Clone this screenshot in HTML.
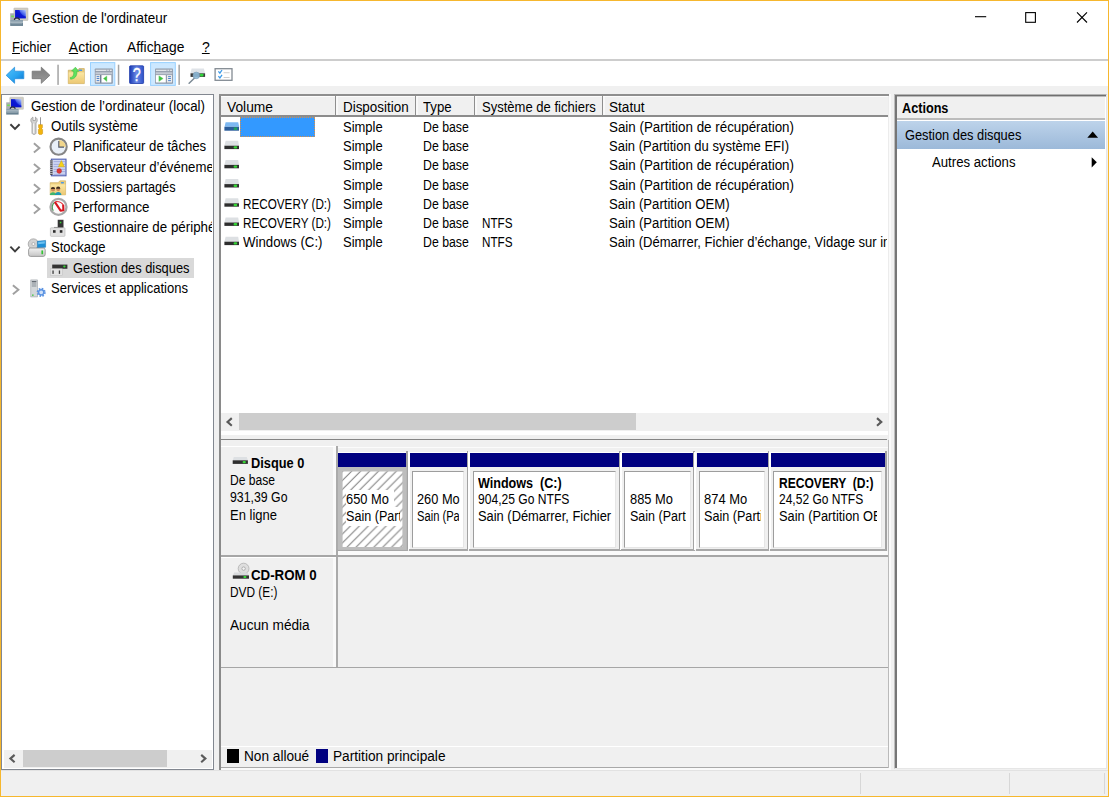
<!DOCTYPE html>
<html lang="fr">
<head>
<meta charset="utf-8">
<title>Gestion de l'ordinateur</title>
<style>
html,body{margin:0;padding:0;}
body{width:1109px;height:797px;overflow:hidden;background:#f0f0f0;font-family:"Liberation Sans",sans-serif;position:relative;}
#win{position:absolute;left:0;top:0;width:1107px;height:795px;border:1px solid #f6b72e;background:#f0f0f0;overflow:hidden;}
.a{position:absolute;}
.t{position:absolute;line-height:1;white-space:pre;color:#000;transform-origin:0 0;}
.s{display:inline-block;transform-origin:0 0;}
.t u{text-decoration:underline;text-underline-offset:0.8px;text-decoration-thickness:1px;}
svg{position:absolute;overflow:visible;}
.hs{top:95.7px;width:1.2px;height:19.6px;background:#8e8e8e;box-shadow:1.5px 0 0 #fff;}
.sb{top:773px;width:1px;height:21px;background:#d7d7d7;}
</style>
</head>
<body>
<div id="win"></div>
<!-- title + menu + toolbar backgrounds -->
<div class="a" style="left:1px;top:1px;width:1107px;height:58.5px;background:#fff"></div>
<div class="a" style="left:1px;top:59.2px;width:1107px;height:1.4px;background:#cdcdcd"></div>
<div class="a" style="left:1px;top:60.6px;width:1107px;height:25.6px;background:#fff"></div>

<!-- window controls -->
<svg style="left:970px;top:8px" width="124" height="20" viewBox="970 8 124 20">
<path d="M975 16.7H986.2" stroke="#000" stroke-width="1.1" fill="none"/>
<rect x="1025.7" y="12.6" width="9.7" height="9.7" stroke="#000" stroke-width="1.1" fill="none"/>
<path d="M1077 12.3L1087 22.5M1087 12.3L1077 22.5" stroke="#000" stroke-width="1.1" fill="none"/>
</svg>

<!--ICONS-TOP-->

<!-- ============ tree pane ============ -->
<div class="a" style="left:1.2px;top:94.2px;width:213px;height:675.4px;background:#fff;border:1.1px solid #828790;box-sizing:border-box"></div>
<div class="a" style="left:47px;top:258px;width:147px;height:19.8px;background:#d9d9d9"></div>
<!-- tree h-scrollbar -->
<div class="a" style="left:3.9px;top:750px;width:208.1px;height:17.5px;background:#f0f0f0"></div>
<div class="a" style="left:22.9px;top:750px;width:143.9px;height:16.8px;background:#cdcdcd"></div>
<svg style="left:3px;top:750px" width="210" height="17" viewBox="3 750 210 17">
<path d="M14.6 754.9L10.4 758.6L14.6 762.3" stroke="#5a5a5a" stroke-width="2.1" fill="none"/>
<path d="M201.2 754.9L205.4 758.6L201.2 762.3" stroke="#5a5a5a" stroke-width="2.1" fill="none"/>
</svg>
<!--ICONS-TREE-->

<!-- ============ middle pane ============ -->
<div class="a" style="left:218.8px;top:94.1px;width:672.7px;height:676px;background:#fafafa;box-sizing:border-box;border-left:2.3px solid #8a8a8a"></div>
<div class="a" style="left:218.8px;top:94.1px;width:670.3px;height:1.6px;background:#8e8e8e"></div>
<div class="a" style="left:221.1px;top:95.7px;width:667.7px;height:672.2px;background:#f0f0f0;box-sizing:border-box;border-right:1.3px solid #ececec;border-bottom:1.6px solid #a8a8a8"></div>
<div class="a" style="left:887.5px;top:440px;width:1.3px;height:327.9px;background:#bababa"></div>
<!-- list (white) -->
<div class="a" style="left:221.1px;top:95.7px;width:667px;height:339.5px;background:#fff"></div>
<!-- header -->
<div class="a" style="left:221.1px;top:95.7px;width:667px;height:19.6px;background:#f0f0f0;border-top:1.1px solid #fcfcfc;box-sizing:border-box"></div>
<div class="a" style="left:221.1px;top:115.2px;width:667px;height:1.7px;background:#8c8c8c"></div>
<div class="a hs" style="left:335.1px"></div>
<div class="a hs" style="left:415.3px"></div>
<div class="a hs" style="left:474px"></div>
<div class="a hs" style="left:601.5px"></div>
<!-- selected cell -->
<div class="a" style="left:240px;top:117px;width:74.7px;height:19.6px;background:#3399ff;box-sizing:border-box;border:1px dotted #d8904a"></div>
<!-- list h-scrollbar -->
<div class="a" style="left:221.1px;top:412.9px;width:667px;height:18.6px;background:#f0f0f0"></div>
<div class="a" style="left:239.1px;top:412.9px;width:397.2px;height:16.9px;background:#cdcdcd"></div>
<svg style="left:220px;top:413px" width="668" height="17" viewBox="220 413 668 17">
<path d="M231.8 418.1L227.5 421.9L231.8 425.7" stroke="#5a5a5a" stroke-width="2.1" fill="none"/>
<path d="M877 418.1L881.3 421.9L877 425.7" stroke="#5a5a5a" stroke-width="2.1" fill="none"/>
</svg>
<!-- splitter -->
<div class="a" style="left:221.1px;top:435.2px;width:667px;height:3.5px;background:#f0f0f0"></div>
<div class="a" style="left:221.1px;top:438.7px;width:666px;height:1.4px;background:#858585"></div>


<!-- disk 0 row -->
<div class="a" style="left:221.1px;top:446.3px;width:114.5px;height:109px;border-top:1.2px solid #fff;box-sizing:border-box"></div>
<div class="a" style="left:333px;top:447.4px;width:3.1px;height:108px;background:#fafafa"></div>
<div class="a" style="left:336.1px;top:446.2px;width:1.8px;height:109.4px;background:#ababab"></div>
<div class="a" style="left:221px;top:555.4px;width:666.5px;height:1.3px;background:#a6a6a6"></div>
<div class="a" style="left:337.6px;top:447px;width:550px;height:1.1px;background:#fbfbfb"></div>
<div class="a" style="left:337.6px;top:551px;width:550px;height:4.4px;background:#fafafa"></div>
<div class="a" style="left:337.9px;top:451.5px;width:68.4px;height:1.2px;background:#fff"></div>
<div class="a" style="left:406.3px;top:451.4px;width:1.9px;height:99.4px;background:#a3a3a3"></div>
<div class="a" style="left:337.3px;top:549.4px;width:70.5px;height:1.5px;background:#a8a8a8"></div>
<div class="a" style="left:338.3px;top:452.6px;width:68.0px;height:14.3px;background:#000080"></div>
<svg style="left:337.9px;top:466.9px" width="68.8" height="82.9" viewBox="0 0 68.8 82.9"><defs><pattern id="hatch" width="8.93" height="8.93" patternUnits="userSpaceOnUse" x="5.0" y="3.9"><rect width="9" height="9" fill="#fff"/><path d="M-1 9.93L9.93 -1M-1 1L1 -1M7.93 9.93L9.93 7.93" stroke="#7c7c7c" stroke-width="1" fill="none"/></pattern></defs><rect x="0" y="0" width="68.8" height="82.9" fill="#bdbdbd"/><rect x="4.6" y="4.5" width="59.8" height="75.5" fill="url(#hatch)"/></svg>
<div class="a" style="left:407.6px;top:451.6px;width:2.2px;height:98.6px;background:#fff"></div>
<div class="a" style="left:407.6px;top:451.5px;width:59.0px;height:1.2px;background:#fff"></div>
<div class="a" style="left:466.6px;top:451.4px;width:1.9px;height:99.4px;background:#a3a3a3"></div>
<div class="a" style="left:408.8px;top:549.4px;width:59.3px;height:1.5px;background:#a8a8a8"></div>
<div class="a" style="left:409.8px;top:452.6px;width:56.8px;height:14.3px;background:#000080"></div>
<div class="a" style="left:412.4px;top:470.6px;width:51.8px;height:77.2px;box-sizing:border-box;background:#fff;border-left:1.3px solid #9d9d9d;border-top:1.3px solid #9d9d9d;border-right:1.3px solid #e6e6e6;border-bottom:1.3px solid #e6e6e6"></div>
<div class="a" style="left:467.9px;top:451.6px;width:2.2px;height:98.6px;background:#fff"></div>
<div class="a" style="left:467.9px;top:451.5px;width:150.8px;height:1.2px;background:#fff"></div>
<div class="a" style="left:618.7px;top:451.4px;width:1.9px;height:99.4px;background:#a3a3a3"></div>
<div class="a" style="left:469.1px;top:549.4px;width:151.1px;height:1.5px;background:#a8a8a8"></div>
<div class="a" style="left:470.1px;top:452.6px;width:148.6px;height:14.3px;background:#000080"></div>
<div class="a" style="left:472.7px;top:470.6px;width:143.6px;height:77.2px;box-sizing:border-box;background:#fff;border-left:1.3px solid #9d9d9d;border-top:1.3px solid #9d9d9d;border-right:1.3px solid #e6e6e6;border-bottom:1.3px solid #e6e6e6"></div>
<div class="a" style="left:619.6px;top:451.6px;width:2.2px;height:98.6px;background:#fff"></div>
<div class="a" style="left:619.6px;top:451.5px;width:73.7px;height:1.2px;background:#fff"></div>
<div class="a" style="left:693.3px;top:451.4px;width:1.9px;height:99.4px;background:#a3a3a3"></div>
<div class="a" style="left:620.8px;top:549.4px;width:74.0px;height:1.5px;background:#a8a8a8"></div>
<div class="a" style="left:621.8px;top:452.6px;width:71.5px;height:14.3px;background:#000080"></div>
<div class="a" style="left:624.4px;top:470.6px;width:66.5px;height:77.2px;box-sizing:border-box;background:#fff;border-left:1.3px solid #9d9d9d;border-top:1.3px solid #9d9d9d;border-right:1.3px solid #e6e6e6;border-bottom:1.3px solid #e6e6e6"></div>
<div class="a" style="left:694.3px;top:451.6px;width:2.2px;height:98.6px;background:#fff"></div>
<div class="a" style="left:694.3px;top:451.5px;width:73.2px;height:1.2px;background:#fff"></div>
<div class="a" style="left:767.5px;top:451.4px;width:1.9px;height:99.4px;background:#a3a3a3"></div>
<div class="a" style="left:695.5px;top:549.4px;width:73.5px;height:1.5px;background:#a8a8a8"></div>
<div class="a" style="left:696.5px;top:452.6px;width:71.0px;height:14.3px;background:#000080"></div>
<div class="a" style="left:699.1px;top:470.6px;width:66.0px;height:77.2px;box-sizing:border-box;background:#fff;border-left:1.3px solid #9d9d9d;border-top:1.3px solid #9d9d9d;border-right:1.3px solid #e6e6e6;border-bottom:1.3px solid #e6e6e6"></div>
<div class="a" style="left:768.5px;top:451.6px;width:2.2px;height:98.6px;background:#fff"></div>
<div class="a" style="left:768.5px;top:451.5px;width:116.3px;height:1.2px;background:#fff"></div>
<div class="a" style="left:884.8px;top:451.4px;width:1.9px;height:99.4px;background:#a3a3a3"></div>
<div class="a" style="left:769.7px;top:549.4px;width:116.6px;height:1.5px;background:#a8a8a8"></div>
<div class="a" style="left:770.7px;top:452.6px;width:114.1px;height:14.3px;background:#000080"></div>
<div class="a" style="left:773.3px;top:470.6px;width:109.1px;height:77.2px;box-sizing:border-box;background:#fff;border-left:1.3px solid #9d9d9d;border-top:1.3px solid #9d9d9d;border-right:1.3px solid #e6e6e6;border-bottom:1.3px solid #e6e6e6"></div>

<!-- cd-rom row -->
<div class="a" style="left:221.1px;top:557.3px;width:114.5px;height:110px;border-top:1.2px solid #fff;box-sizing:border-box"></div>
<div class="a" style="left:333px;top:558.4px;width:3.1px;height:109px;background:#fafafa"></div>
<div class="a" style="left:336.1px;top:557.2px;width:1.8px;height:110.4px;background:#ababab"></div>
<div class="a" style="left:221px;top:667px;width:666.5px;height:1.3px;background:#a6a6a6"></div>

<!-- legend -->
<div class="a" style="left:221.1px;top:746.1px;width:666.6px;height:1.2px;background:#fff"></div>
<div class="a" style="left:227px;top:749.4px;width:11.8px;height:14.1px;background:#000"></div>
<div class="a" style="left:315.6px;top:749.4px;width:12px;height:14.1px;background:#000080"></div>

<!-- ============ actions pane ============ -->
<div class="a" style="left:894px;top:94px;width:213px;height:675px;background:#fff;box-sizing:border-box;border-left:1px solid #bdbdbd;border-top:1px solid #b4b4b4;border-right:1px solid #e6e6e6;border-bottom:1px solid #e6e6e6"></div>
<div class="a" style="left:895px;top:95px;width:211px;height:673px;box-sizing:border-box;border-left:2px solid #767676;border-top:1px solid #707070"></div>
<div class="a" style="left:897px;top:96px;width:209px;height:1px;background:#b9b9b9"></div>
<div class="a" style="left:896.9px;top:97.4px;width:208.6px;height:21px;background:#f0f0f0"></div>
<div class="a" style="left:896.9px;top:118.4px;width:208.6px;height:1.4px;background:#bcbcbc"></div>
<div class="a" style="left:896.9px;top:120.8px;width:208.6px;height:27.9px;background:linear-gradient(#bdd3ea,#9cb9d9)"></div>
<svg style="left:1085px;top:130px" width="16" height="40" viewBox="1085 130 16 40">
<path d="M1087.3 137.8L1092.7 131.4L1098.1 137.8Z" fill="#000"/>
<path d="M1091.7 157.2L1096.8 162.3L1091.7 167.5Z" fill="#000"/>
</svg>

<!-- ============ status bar ============ -->
<div class="a" style="left:1px;top:770.3px;width:1107px;height:1px;background:#e2e2e2"></div>
<div class="a sb" style="left:859.5px"></div>
<div class="a sb" style="left:1009px"></div>
<div class="a sb" style="left:1104px"></div>

<svg style="left:0;top:0" width="1109" height="797" viewBox="0 0 1109 797"><defs><linearGradient id="gBack" x1="0" y1="0" x2="1" y2="1"><stop offset="0" stop-color="#52c4fb"/><stop offset="0.55" stop-color="#2aa4f0"/><stop offset="1" stop-color="#0570cc"/></linearGradient><linearGradient id="gFwd" x1="0" y1="0" x2="0" y2="1"><stop offset="0" stop-color="#7c7c7c"/><stop offset="1" stop-color="#9a9a9a"/></linearGradient><linearGradient id="gFold" x1="0" y1="0" x2="0" y2="1"><stop offset="0" stop-color="#fbe7a4"/><stop offset="1" stop-color="#ecc873"/></linearGradient><linearGradient id="gHelp" x1="0" y1="0" x2="1" y2="0"><stop offset="0" stop-color="#1a3ab4"/><stop offset="0.5" stop-color="#6b8ae6"/><stop offset="1" stop-color="#2c50c8"/></linearGradient><linearGradient id="gScr" x1="0" y1="1" x2="1" y2="0"><stop offset="0" stop-color="#0818d8"/><stop offset="0.45" stop-color="#1030e0"/><stop offset="1" stop-color="#b8ccff"/></linearGradient><linearGradient id="gBox" x1="0" y1="0" x2="0" y2="1"><stop offset="0" stop-color="#8ea2b0"/><stop offset="1" stop-color="#5f7a8a"/></linearGradient><linearGradient id="gDrv" x1="0" y1="0" x2="0" y2="1"><stop offset="0" stop-color="#f2f2f2"/><stop offset="1" stop-color="#c4c4c4"/></linearGradient></defs><g transform="translate(10 8) scale(1.0)"><rect x="3.9" y="0" width="14.1" height="12.5" rx="0.6" fill="#cfcdc4" stroke="#b8b6ae" stroke-width="0.5"/><rect x="5.2" y="2" width="10.6" height="8.3" fill="url(#gScr)"/><path d="M5.2 2H9.3C10.4 4.6 11.4 7.4 15.8 8.6V10.3H5.2Z" fill="#0a10cc" opacity="0.75"/><rect x="0.2" y="5.3" width="4" height="7" fill="#a9adb0"/><rect x="1.2" y="7.6" width="2.7" height="1.5" fill="#6fe04c"/><path d="M4.4 12.2C4.4 9.2 9.4 9.2 9.4 12.2" stroke="#2e3440" stroke-width="1.2" fill="none"/><rect x="0.2" y="12" width="12.8" height="5.9" fill="url(#gBox)"/><rect x="0.2" y="13.6" width="12.8" height="1.1" fill="#b9c6ce"/><rect x="1.2" y="15.2" width="10.8" height="1" fill="#8fa2ae"/></g><path d="M6.2 75.3L14.6 67.2V71.2H23.8V78.7H14.6V83.3Z" fill="url(#gBack)" stroke="#2a8fdc" stroke-width="0.8" stroke-linejoin="round"/><path d="M49.9 75.3L41.3 67.2V71.2H32.2V78.7H41.3V83.3Z" fill="url(#gFwd)" stroke="#747474" stroke-width="0.8" stroke-linejoin="round"/><rect x="57.3" y="64.7" width="1.5" height="20.2" fill="#a4a4a4"/><rect x="117.8" y="64.7" width="1.5" height="20.2" fill="#a4a4a4"/><rect x="178.4" y="64.7" width="1.5" height="20.2" fill="#a4a4a4"/><path d="M68.3 70.2H77.5L79 68.6H84.3V83.6H68.3Z" fill="#e9cc7c" stroke="#c9a95a" stroke-width="0.7"/><rect x="68.6" y="72.4" width="15.5" height="11" fill="url(#gFold)"/><rect x="78.6" y="69.6" width="3.6" height="1.5" rx="0.7" fill="#4a98e8"/><path d="M70.2 77.6C73.4 77.2 74 74.2 73.6 71.2L71.6 71L75.4 67.2L78.8 71.4L76.9 71.2C77.4 76 74.6 79 70.6 79.2Z" fill="#5fe05f" stroke="#40bc40" stroke-width="0.6"/><rect x="90.5" y="62.6" width="24.299999999999997" height="22.8" fill="#cce8ff" stroke="#99d1ff" stroke-width="1"/><rect x="150.6" y="62.6" width="24.700000000000017" height="22.8" fill="#cce8ff" stroke="#99d1ff" stroke-width="1"/><rect x="94.8" y="68.4" width="18" height="15.3" rx="0.8" fill="#8d97a6"/><rect x="95.39999999999999" y="69.2" width="16.8" height="2.2" fill="#aab2be"/><rect x="95.8" y="69.9" width="10.4" height="0.9" fill="#eef0f4"/><rect x="107.39999999999999" y="69.8" width="1.2" height="1.1" fill="#eef0f4"/><rect x="110.0" y="69.8" width="1.6" height="1.1" fill="#eef0f4"/><rect x="95.39999999999999" y="72.2" width="16.8" height="2.2" fill="#c3c9d3"/><rect x="95.6" y="75.1" width="4.6" height="7.4" fill="#ececec"/><rect x="96.6" y="76.2" width="2.7" height="0.9" fill="#3d78c8"/><rect x="96.6" y="78" width="2.7" height="0.9" fill="#3d78c8"/><rect x="96.6" y="80.2" width="2.7" height="0.9" fill="#3d78c8"/><rect x="100.2" y="75" width="1" height="7.6" fill="#66758c"/><rect x="101.5" y="75.1" width="9.9" height="7.4" fill="#fff"/><path d="M103.4 78.6L106.9 75.9V81.5Z" fill="#3fbf3f" stroke="#6fd66f" stroke-width="0.4"/><rect x="129.6" y="65.8" width="14" height="17.7" rx="0.8" fill="url(#gHelp)" stroke="#1c38a8" stroke-width="0.8"/><text x="0" y="0" transform="translate(136.7 81.3) scale(0.82 1)" font-family="Liberation Sans, sans-serif" font-size="17.5" text-anchor="middle" fill="#fff" stroke="#fff" stroke-width="0.35">?</text><rect x="155.0" y="68.4" width="18" height="15.3" rx="0.8" fill="#8d97a6"/><rect x="155.6" y="69.2" width="16.8" height="2.2" fill="#aab2be"/><rect x="156.0" y="69.9" width="10.4" height="0.9" fill="#eef0f4"/><rect x="167.6" y="69.8" width="1.2" height="1.1" fill="#eef0f4"/><rect x="170.2" y="69.8" width="1.6" height="1.1" fill="#eef0f4"/><rect x="155.6" y="72.2" width="16.8" height="2.2" fill="#c3c9d3"/><rect x="155.8" y="75.1" width="10" height="7.4" fill="#fff"/><path d="M163.2 78.6L158.9 75.8V81.4Z" fill="#3fbf3f" stroke="#6fd66f" stroke-width="0.4"/><rect x="166.9" y="75.1" width="5.2" height="7.4" fill="#ececec"/><rect x="168.1" y="76.2" width="2.8" height="0.9" fill="#3d78c8"/><rect x="168.1" y="78" width="2.8" height="0.9" fill="#3d78c8"/><rect x="168.1" y="80.2" width="2.8" height="0.9" fill="#3d78c8"/><path d="M191.6 68.4H203.9L205 73.3H190.5Z" fill="#dfe3e8"/><rect x="190.5" y="73.3" width="14.6" height="3.6" fill="#3a3a3a"/><rect x="199.9" y="73.8" width="3.6" height="2.6" rx="0.8" fill="#2fd43a"/><path d="M194.3 78.2L189.1 83.3" stroke="#7d8b96" stroke-width="1.5" stroke-linecap="round"/><circle cx="196.3" cy="75.4" r="3.3" fill="#8db9d8" fill-opacity="0.9" stroke="#7c9cb4" stroke-width="0.7"/><rect x="215.1" y="68.7" width="16.9" height="11.6" fill="#fff" stroke="#838b93" stroke-width="1.3"/><path d="M218.4 71.4L219.9 73.2L222 70" stroke="#3c9ae8" stroke-width="1.3" fill="none"/><path d="M218.4 76.2L219.9 78L222 74.8" stroke="#3c9ae8" stroke-width="1.3" fill="none"/><rect x="223.6" y="72.3" width="6" height="0.9" fill="#c9c9c9"/><rect x="223.6" y="77" width="6" height="0.9" fill="#c9c9c9"/><g transform="translate(6 97.2) scale(0.97)"><rect x="3.9" y="0" width="14.1" height="12.5" rx="0.6" fill="#cfcdc4" stroke="#b8b6ae" stroke-width="0.5"/><rect x="5.2" y="2" width="10.6" height="8.3" fill="url(#gScr)"/><path d="M5.2 2H9.3C10.4 4.6 11.4 7.4 15.8 8.6V10.3H5.2Z" fill="#0a10cc" opacity="0.75"/><rect x="0.2" y="5.3" width="4" height="7" fill="#a9adb0"/><rect x="1.2" y="7.6" width="2.7" height="1.5" fill="#6fe04c"/><path d="M4.4 12.2C4.4 9.2 9.4 9.2 9.4 12.2" stroke="#2e3440" stroke-width="1.2" fill="none"/><rect x="0.2" y="12" width="12.8" height="5.9" fill="url(#gBox)"/><rect x="0.2" y="13.6" width="12.8" height="1.1" fill="#b9c6ce"/><rect x="1.2" y="15.2" width="10.8" height="1" fill="#8fa2ae"/></g><path d="M10.4 124.25999999999999L15 128.96L19.6 124.25999999999999" stroke="#3c3c3c" stroke-width="1.95" fill="none"/><path d="M33 117.16C30.6 118.06 30 121.06 32 122.86V132.86C32 134.96 36 134.96 36 132.86V122.86C38 121.06 37.4 118.06 35.4 117.16V120.46000000000001H33Z" fill="#d2d2d2" stroke="#909090" stroke-width="0.7"/><rect x="33" y="123.46000000000001" width="1.2" height="9.6" fill="#f2f2f2"/><rect x="40" y="117.26" width="0.9" height="8" fill="#8c8c8c"/><path d="M38.6 124.66H42.4V127.66L41.7 128.46L42.6 129.46V133.46C42.6 134.86 38.4 134.86 38.4 133.46V129.46L39.3 128.46L38.6 127.66Z" fill="#f2b40e" stroke="#c88a06" stroke-width="0.5"/><path d="M33.9 143.32L39.4 147.92L33.9 152.51999999999998" stroke="#a0a0a0" stroke-width="1.95" fill="none"/><circle cx="58.6" cy="146.72" r="8.1" fill="#e9f0f8" stroke="#868686" stroke-width="2.1"/><path d="M58.8 146.92V139.92A7 7 0 0 1 65.8 146.92Z" fill="#f1d68c"/><path d="M58.8 141.12V147.12H64" stroke="#50586a" stroke-width="1.1" fill="none"/><path d="M33.9 163.88L39.4 168.48L33.9 173.07999999999998" stroke="#a0a0a0" stroke-width="1.95" fill="none"/><rect x="51.4" y="159.17999999999998" width="14.6" height="16.6" fill="#cfd6f2" stroke="#4f5fb2" stroke-width="1.1"/><rect x="53.6" y="161.4" width="11.6" height="0.7" fill="#8f9ad6"/><rect x="53.6" y="163.9" width="11.6" height="0.7" fill="#8f9ad6"/><rect x="53.6" y="166.4" width="11.6" height="0.7" fill="#8f9ad6"/><rect x="53.6" y="168.9" width="11.6" height="0.7" fill="#8f9ad6"/><rect x="53.6" y="171.4" width="11.6" height="0.7" fill="#8f9ad6"/><rect x="53.6" y="173.9" width="11.6" height="0.7" fill="#8f9ad6"/><rect x="50.2" y="159.98" width="2.4" height="15" fill="#4a4a52"/><rect x="49.8" y="160.6" width="3" height="0.8" fill="#c8c8d0"/><rect x="49.8" y="162.7" width="3" height="0.8" fill="#c8c8d0"/><rect x="49.8" y="164.8" width="3" height="0.8" fill="#c8c8d0"/><rect x="49.8" y="166.9" width="3" height="0.8" fill="#c8c8d0"/><rect x="49.8" y="169.0" width="3" height="0.8" fill="#c8c8d0"/><rect x="49.8" y="171.1" width="3" height="0.8" fill="#c8c8d0"/><rect x="49.8" y="173.2" width="3" height="0.8" fill="#c8c8d0"/><path d="M61.4 160.57999999999998L64.4 166.77999999999997H58.4Z" fill="#f6d21a" stroke="#c8a000" stroke-width="0.4"/><circle cx="59.2" cy="170.98" r="2.4" fill="#e03a3a" stroke="#b01c1c" stroke-width="0.4"/><path d="M33.9 184.14000000000001L39.4 188.74L33.9 193.34" stroke="#a0a0a0" stroke-width="1.95" fill="none"/><path d="M50.2 182.64000000000001H58L60 180.84H65.6V194.84H50.2Z" fill="#edcf7e" stroke="#c9a95a" stroke-width="0.6"/><rect x="50.5" y="184.44" width="14.8" height="10.2" fill="url(#gFold)"/><rect x="60.8" y="182.04" width="3.2" height="1.5" rx="0.7" fill="#4a98e8"/><circle cx="53" cy="189.44" r="2.1" fill="#c98c5c"/><path d="M50.9 189.04A2.1 2.1 0 0 1 55.1 189.04Z" fill="#3c2c20"/><path d="M49.8 195.04C49.8 191.24 56.2 191.24 56.2 195.04Z" fill="#3fb56a"/><circle cx="58.2" cy="189.04" r="2.1" fill="#c98c5c"/><path d="M56.1 188.64000000000001A2.1 2.1 0 0 1 60.3 188.64000000000001Z" fill="#3c2c20"/><path d="M55 195.04C55 190.84 61.4 190.84 61.4 195.04Z" fill="#1f9ab4"/><path d="M33.9 204.40000000000003L39.4 209.00000000000003L33.9 213.60000000000002" stroke="#a0a0a0" stroke-width="1.95" fill="none"/><circle cx="58.5" cy="206.90000000000003" r="8" fill="#fbfbfb" stroke="#a8a8a8" stroke-width="2.3"/><path d="M53.4 210.70000000000002A6 6 0 0 1 54.4 202.50000000000003" stroke="#4a9a5a" stroke-width="1.2" fill="none"/><path d="M54.8 201.90000000000003L60.6 210.70000000000002L63.4 210.3L63.2 204.90000000000003" stroke="#d8141e" stroke-width="2.1" fill="none" stroke-linejoin="round"/><path d="M55.6 201.50000000000003C59 201.3 62 202.70000000000002 63.4 205.10000000000002" stroke="#e03038" stroke-width="1.1" fill="none"/><rect x="57.7" y="219.76000000000002" width="5.8" height="8.2" fill="#343434"/><rect x="59.8" y="221.76000000000002" width="1.5" height="1.5" fill="#35d435"/><path d="M54 226.96H58V227.96H54Z" fill="#585858"/><rect x="50.4" y="227.76000000000002" width="14.6" height="8.6" rx="0.8" fill="#e2e2e2" stroke="#b4b4b4" stroke-width="0.6"/><rect x="53" y="230.16000000000003" width="2.6" height="2.6" fill="#2c2c2c"/><rect x="59.8" y="230.16000000000003" width="2.6" height="2.6" fill="#2c2c2c"/><path d="M10.4 246.62L15 251.32000000000002L19.6 246.62" stroke="#3c3c3c" stroke-width="1.95" fill="none"/><circle cx="33.4" cy="244.02" r="5.2" fill="#d2d2d2" stroke="#9a9a9a" stroke-width="0.7"/><circle cx="33.4" cy="244.02" r="1.5" fill="#f6f6f6" stroke="#8a8a8a" stroke-width="0.5"/><path d="M37.4 241.22L45.6 240.42000000000002V247.22L37.4 248.02Z" fill="#1f8fd6" stroke="#1670b0" stroke-width="0.5"/><path d="M38.2 242.02L44.8 241.32V243.42000000000002L38.2 244.22Z" fill="#6cc0f0"/><rect x="28.6" y="248.02" width="16.6" height="8.4" rx="2" fill="url(#gDrv)" stroke="#8c8c8c" stroke-width="0.8"/><rect x="41.4" y="250.42000000000002" width="1.7" height="3.8" fill="#35c435"/><path d="M53.4 260.68H66L67.3 264.58H52.2Z" fill="#d6d8da"/><rect x="52.2" y="264.58" width="15.2" height="4.2" fill="#333"/><rect x="63.2" y="265.58" width="2.4" height="1.8" rx="0.8" fill="#35d435"/><rect x="50.3" y="268.78" width="12" height="6.8" fill="#e4e4e4" stroke="#bdbdbd" stroke-width="0.5"/><rect x="52.4" y="270.48" width="1.3" height="3.4" fill="#3c3c3c"/><rect x="58.8" y="270.48" width="1.3" height="3.4" fill="#3c3c3c"/><path d="M12.9 285.14L18.400000000000002 289.74L12.9 294.34000000000003" stroke="#a0a0a0" stroke-width="1.95" fill="none"/><rect x="30.8" y="279.94" width="6.6" height="17" fill="#d3d7da" stroke="#9aa0a6" stroke-width="0.6"/><rect x="31.8" y="281.14" width="4.6" height="1.2" fill="#555c64"/><rect x="31.8" y="283.53999999999996" width="4.6" height="0.9" fill="#7e868e"/><rect x="31.8" y="285.53999999999996" width="4.6" height="0.9" fill="#7e868e"/><rect x="32" y="294.53999999999996" width="1.6" height="1.2" fill="#35c435"/><circle cx="41.2" cy="292.34" r="3.4" fill="none" stroke="#5b93e2" stroke-width="2.3" stroke-dasharray="1.5 1.17"/><circle cx="41.2" cy="292.34" r="2.6" fill="#cfe0f8" stroke="#5b93e2" stroke-width="1.4"/><g transform="translate(224.6 122.2)"><path d="M1 0H13.6L14.6 4.6H0Z" fill="#7db8f2"/><rect x="-0.2" y="4.6" width="14.6" height="3.9" fill="#2a5c9a"/><rect x="9.2" y="5.2" width="3.4" height="2.6" fill="#20a060"/></g><g transform="translate(224.6 140.7)"><path d="M1 0H13.6L14.4 5H-0.2Z" fill="#dde0e3"/><rect x="-0.2" y="5" width="14.6" height="3.4" fill="#2e2e2e"/><rect x="9" y="5.5" width="3.6" height="2.4" rx="1" fill="#35d435"/></g><g transform="translate(224.6 159.9)"><path d="M1 0H13.6L14.4 5H-0.2Z" fill="#dde0e3"/><rect x="-0.2" y="5" width="14.6" height="3.4" fill="#2e2e2e"/><rect x="9" y="5.5" width="3.6" height="2.4" rx="1" fill="#35d435"/></g><g transform="translate(224.6 179.1)"><path d="M1 0H13.6L14.4 5H-0.2Z" fill="#dde0e3"/><rect x="-0.2" y="5" width="14.6" height="3.4" fill="#2e2e2e"/><rect x="9" y="5.5" width="3.6" height="2.4" rx="1" fill="#35d435"/></g><g transform="translate(224.6 198.3)"><path d="M1 0H13.6L14.4 5H-0.2Z" fill="#dde0e3"/><rect x="-0.2" y="5" width="14.6" height="3.4" fill="#2e2e2e"/><rect x="9" y="5.5" width="3.6" height="2.4" rx="1" fill="#35d435"/></g><g transform="translate(224.6 217.5)"><path d="M1 0H13.6L14.4 5H-0.2Z" fill="#dde0e3"/><rect x="-0.2" y="5" width="14.6" height="3.4" fill="#2e2e2e"/><rect x="9" y="5.5" width="3.6" height="2.4" rx="1" fill="#35d435"/></g><g transform="translate(224.6 236.7)"><path d="M1 0H13.6L14.4 5H-0.2Z" fill="#dde0e3"/><rect x="-0.2" y="5" width="14.6" height="3.4" fill="#2e2e2e"/><rect x="9" y="5.5" width="3.6" height="2.4" rx="1" fill="#35d435"/></g><path d="M233.8 457H246.8L247.8 460.3H232.8Z" fill="#dde0e3"/><rect x="232.7" y="460.3" width="15.2" height="3.6" fill="#2e2e2e"/><rect x="242.6" y="460.9" width="3.2" height="2.4" rx="1" fill="#35d435"/><circle cx="243.6" cy="568.6" r="5.4" fill="#dedede" stroke="#a8a8a8" stroke-width="0.7"/><circle cx="243.6" cy="568.6" r="1.7" fill="#f4f4f4" stroke="#8e8e8e" stroke-width="0.6"/><path d="M234.2 572.4H247.6L249 575.4H232.8Z" fill="#d8dadc"/><rect x="232.8" y="575.4" width="16.2" height="3.3" fill="#333"/><rect x="243.4" y="575.9" width="3" height="2.2" rx="0.8" fill="#35d435"/></svg>
<div class="t" style="left:31.8px;top:11px;font-size:14px;transform:scaleX(0.9627);">Gestion de l&#x27;ordinateur</div>
<div class="t" style="left:12.1px;top:40px;font-size:14px;transform:scaleX(0.9282);"><u>F</u>ichier</div>
<div class="t" style="left:68.8px;top:40px;font-size:14px;"><u>A</u>ction</div>
<div class="t" style="left:127.2px;top:40px;font-size:14px;transform:scaleX(0.9858);">Affic<u>h</u>age</div>
<div class="t" style="left:201.9px;top:40px;font-size:14px;"><u>?</u></div>
<div class="t" style="left:30.6px;top:99px;font-size:14px;transform:scaleX(0.9515);">Gestion de l’ordinateur (local)</div>
<div class="t" style="left:50.9px;top:119px;font-size:14px;transform:scaleX(0.9476);">Outils système</div>
<div class="t" style="left:72.7px;top:139px;font-size:14px;transform:scaleX(0.9404);">Planificateur de tâches</div>
<div class="t" style="left:72.7px;top:160px;font-size:14px;width:139.0px;overflow:hidden;padding-bottom:4px;"><span class="s" style="transform:scaleX(0.9418);">Observateur d’événements</span></div>
<div class="t" style="left:72.7px;top:180px;font-size:14px;transform:scaleX(0.9085);">Dossiers partagés</div>
<div class="t" style="left:72.7px;top:200px;font-size:14px;transform:scaleX(0.9544);">Performance</div>
<div class="t" style="left:72.7px;top:220px;font-size:14px;width:139.0px;overflow:hidden;padding-bottom:4px;"><span class="s" style="transform:scaleX(0.9530);">Gestionnaire de périphériques</span></div>
<div class="t" style="left:50.9px;top:240px;font-size:14px;transform:scaleX(0.9336);">Stockage</div>
<div class="t" style="left:72.7px;top:261px;font-size:14px;transform:scaleX(0.9183);">Gestion des disques</div>
<div class="t" style="left:50.9px;top:281px;font-size:14px;transform:scaleX(0.9315);">Services et applications</div>
<div class="t" style="left:226.8px;top:100px;font-size:14px;transform:scaleX(0.9849);">Volume</div>
<div class="t" style="left:343.0px;top:100px;font-size:14px;transform:scaleX(0.9579);">Disposition</div>
<div class="t" style="left:422.9px;top:100px;font-size:14px;transform:scaleX(0.9420);">Type</div>
<div class="t" style="left:481.5px;top:100px;font-size:14px;transform:scaleX(0.9315);">Système de fichiers</div>
<div class="t" style="left:608.9px;top:100px;font-size:14px;transform:scaleX(0.9728);">Statut</div>
<div class="t" style="left:343.0px;top:120px;font-size:14px;transform:scaleX(0.9276);">Simple</div>
<div class="t" style="left:422.9px;top:120px;font-size:14px;transform:scaleX(0.8781);">De base</div>
<div class="t" style="left:608.9px;top:120px;font-size:14px;transform:scaleX(0.9547);">Sain (Partition de récupération)</div>
<div class="t" style="left:343.0px;top:139px;font-size:14px;transform:scaleX(0.9276);">Simple</div>
<div class="t" style="left:422.9px;top:139px;font-size:14px;transform:scaleX(0.8781);">De base</div>
<div class="t" style="left:608.9px;top:139px;font-size:14px;transform:scaleX(0.9290);">Sain (Partition du système EFI)</div>
<div class="t" style="left:343.0px;top:158px;font-size:14px;transform:scaleX(0.9276);">Simple</div>
<div class="t" style="left:422.9px;top:158px;font-size:14px;transform:scaleX(0.8781);">De base</div>
<div class="t" style="left:608.9px;top:158px;font-size:14px;transform:scaleX(0.9547);">Sain (Partition de récupération)</div>
<div class="t" style="left:343.0px;top:178px;font-size:14px;transform:scaleX(0.9276);">Simple</div>
<div class="t" style="left:422.9px;top:178px;font-size:14px;transform:scaleX(0.8781);">De base</div>
<div class="t" style="left:608.9px;top:178px;font-size:14px;transform:scaleX(0.9547);">Sain (Partition de récupération)</div>
<div class="t" style="left:242.7px;top:197px;font-size:14px;transform:scaleX(0.8359);">RECOVERY (D:)</div>
<div class="t" style="left:343.0px;top:197px;font-size:14px;transform:scaleX(0.9276);">Simple</div>
<div class="t" style="left:422.9px;top:197px;font-size:14px;transform:scaleX(0.8781);">De base</div>
<div class="t" style="left:608.9px;top:197px;font-size:14px;transform:scaleX(0.9387);">Sain (Partition OEM)</div>
<div class="t" style="left:242.7px;top:216px;font-size:14px;transform:scaleX(0.8359);">RECOVERY (D:)</div>
<div class="t" style="left:343.0px;top:216px;font-size:14px;transform:scaleX(0.9276);">Simple</div>
<div class="t" style="left:422.9px;top:216px;font-size:14px;transform:scaleX(0.8781);">De base</div>
<div class="t" style="left:481.5px;top:216px;font-size:14px;transform:scaleX(0.8342);">NTFS</div>
<div class="t" style="left:608.9px;top:216px;font-size:14px;transform:scaleX(0.9387);">Sain (Partition OEM)</div>
<div class="t" style="left:242.7px;top:235px;font-size:14px;transform:scaleX(0.9463);">Windows (C:)</div>
<div class="t" style="left:343.0px;top:235px;font-size:14px;transform:scaleX(0.9276);">Simple</div>
<div class="t" style="left:422.9px;top:235px;font-size:14px;transform:scaleX(0.8781);">De base</div>
<div class="t" style="left:481.5px;top:235px;font-size:14px;transform:scaleX(0.8342);">NTFS</div>
<div class="t" style="left:608.9px;top:235px;font-size:14px;width:278.6px;overflow:hidden;padding-bottom:4px;"><span class="s" style="transform:scaleX(0.9302);">Sain (Démarrer, Fichier d’échange, Vidage sur image mémoire, Partition principale)</span></div>
<div class="t" style="left:250.5px;top:456px;font-size:14px;font-weight:bold;transform:scaleX(0.9133);">Disque 0</div>
<div class="t" style="left:229.9px;top:473px;font-size:14px;transform:scaleX(0.8628);">De base</div>
<div class="t" style="left:229.9px;top:490px;font-size:14px;transform:scaleX(0.8793);">931,39 Go</div>
<div class="t" style="left:229.9px;top:508px;font-size:14px;transform:scaleX(0.9290);">En ligne</div>
<div class="t" style="left:346.0px;top:492px;font-size:14px;background:#fff;padding:2px 1.5px 3px 0;margin-top:-2px;"><span class="s" style="transform:scaleX(0.9186);">650 Mo</span></div>
<div class="t" style="left:346.1px;top:509px;font-size:14px;width:52.8px;overflow:hidden;background:#fff;padding:2px 1.5px 3px 0;margin-top:-2px;"><span class="s" style="transform:scaleX(0.8994);">Sain (Partition de récupération)</span></div>
<div class="t" style="left:417.0px;top:492px;font-size:14px;transform:scaleX(0.9143);">260 Mo</div>
<div class="t" style="left:417.1px;top:509px;font-size:14px;width:42.0px;overflow:hidden;padding-bottom:4px;"><span class="s" style="transform:scaleX(0.7970);">Sain (Partition du système EFI)</span></div>
<div class="t" style="left:478.3px;top:476px;font-size:14px;font-weight:bold;transform:scaleX(0.8982);">Windows &nbsp;(C:)</div>
<div class="t" style="left:478.3px;top:492px;font-size:14px;transform:scaleX(0.8637);">904,25 Go NTFS</div>
<div class="t" style="left:478.3px;top:509px;font-size:14px;width:134.9px;overflow:hidden;padding-bottom:4px;"><span class="s" style="transform:scaleX(0.9198);">Sain (Démarrer, Fichier d’échange, Vidage sur image mémoire, Partition principale)</span></div>
<div class="t" style="left:629.5px;top:492px;font-size:14px;transform:scaleX(0.9186);">885 Mo</div>
<div class="t" style="left:629.5px;top:509px;font-size:14px;width:56.4px;overflow:hidden;padding-bottom:4px;"><span class="s" style="transform:scaleX(0.8932);">Sain (Partition de récupération)</span></div>
<div class="t" style="left:704.0px;top:492px;font-size:14px;transform:scaleX(0.9271);">874 Mo</div>
<div class="t" style="left:704.0px;top:509px;font-size:14px;width:56.9px;overflow:hidden;padding-bottom:4px;"><span class="s" style="transform:scaleX(0.9012);">Sain (Partition OEM)</span></div>
<div class="t" style="left:778.7px;top:476px;font-size:14px;font-weight:bold;transform:scaleX(0.8615);">RECOVERY &nbsp;(D:)</div>
<div class="t" style="left:778.7px;top:492px;font-size:14px;transform:scaleX(0.8588);">24,52 Go NTFS</div>
<div class="t" style="left:778.8px;top:509px;font-size:14px;width:98.5px;overflow:hidden;padding-bottom:4px;"><span class="s" style="transform:scaleX(0.9141);">Sain (Partition OEM)</span></div>
<div class="t" style="left:250.5px;top:568px;font-size:14px;font-weight:bold;transform:scaleX(0.9490);">CD-ROM 0</div>
<div class="t" style="left:229.9px;top:585px;font-size:14px;transform:scaleX(0.8464);">DVD (E:)</div>
<div class="t" style="left:229.9px;top:618px;font-size:14px;transform:scaleX(0.9753);">Aucun média</div>
<div class="t" style="left:244.0px;top:749px;font-size:14px;transform:scaleX(0.9740);">Non alloué</div>
<div class="t" style="left:333.1px;top:749px;font-size:14px;transform:scaleX(0.9768);">Partition principale</div>
<div class="t" style="left:901.8px;top:101px;font-size:14px;font-weight:bold;transform:scaleX(0.9037);">Actions</div>
<div class="t" style="left:905.1px;top:128px;font-size:14px;transform:scaleX(0.9168);">Gestion des disques</div>
<div class="t" style="left:931.5px;top:155px;font-size:14px;transform:scaleX(0.9412);">Autres actions</div>
</body>
</html>
